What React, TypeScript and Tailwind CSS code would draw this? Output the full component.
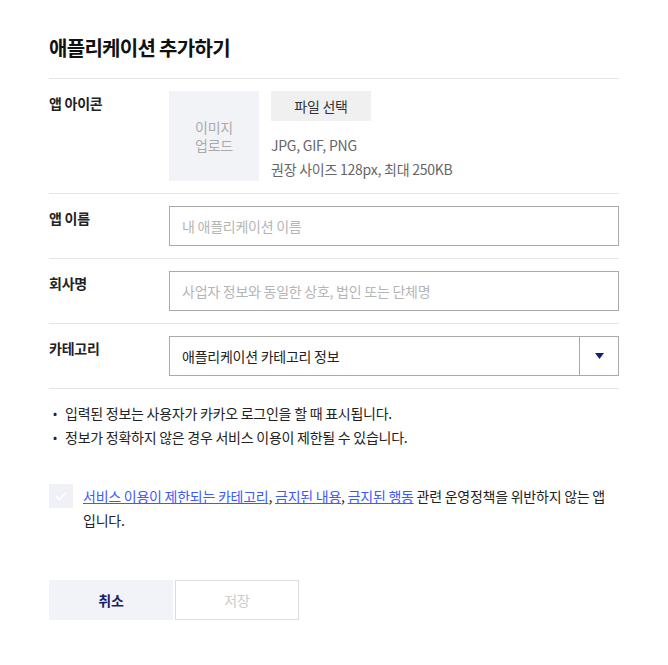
import React from "react";

const font = { fontFamily: '"Noto Sans CJK KR", "Noto Sans", sans-serif' };

function Row({
  label,
  children,
}: {
  label: string;
  children: React.ReactNode;
}) {
  return (
    <div className="flex border-b border-[#e5e5e5] py-[12px]">
      <div className="w-[120px] shrink-0 text-[14px] font-bold leading-[24px] text-[#222]">
        {label}
      </div>
      <div className="flex-1">{children}</div>
    </div>
  );
}

export default function App() {
  return (
    <div
      className="min-h-screen bg-white px-[49px] pt-[33px] tracking-[-0.25px]"
      style={font}
    >
      {/* 제목 */}
      <h1 className="border-b border-[#e5e5e5] pb-[15px] text-[20px] font-bold leading-[30px] tracking-[-0.7px] text-[#111]">
        애플리케이션 추가하기
      </h1>

      {/* 앱 아이콘 */}
      <Row label="앱 아이콘">
        <div className="flex gap-[12px]">
          <div className="flex h-[90px] w-[90px] items-center justify-center bg-[#f2f3f7] text-center text-[14px] leading-[18px] text-[#aaa]">
            이미지
            <br />
            업로드
          </div>
          <div>
            <button className="h-[30px] w-[100px] bg-[#f0f0f0] text-[14px] text-[#333]">
              파일 선택
            </button>
            <div className="mt-[12px] text-[14px] leading-[24px] text-[#666]">
              <p>JPG, GIF, PNG</p>
              <p>권장 사이즈 128px, 최대 250KB</p>
            </div>
          </div>
        </div>
      </Row>

      {/* 앱 이름 */}
      <Row label="앱 이름">
        <input
          className="h-[40px] w-full border border-[#aaa] px-[12px] text-[14px] tracking-[-0.25px] text-[#222] outline-none placeholder:text-[#b5b5b5]"
          placeholder="내 애플리케이션 이름"
          style={font}
        />
      </Row>

      {/* 회사명 */}
      <Row label="회사명">
        <input
          className="h-[40px] w-full border border-[#aaa] px-[12px] text-[14px] tracking-[-0.25px] text-[#222] outline-none placeholder:text-[#b5b5b5]"
          placeholder="사업자 정보와 동일한 상호, 법인 또는 단체명"
          style={font}
        />
      </Row>

      {/* 카테고리 */}
      <Row label="카테고리">
        <div className="flex h-[40px] w-full border border-[#aaa]">
          <div className="flex flex-1 items-center px-[12px] text-[14px] text-[#222]">
            애플리케이션 카테고리 정보
          </div>
          <div className="flex w-[39px] items-center justify-center border-l border-[#aaa]">
            <svg width="9" height="6" viewBox="0 0 9 6">
              <path d="M0 0h9L4.5 6z" fill="#1b1e6b" />
            </svg>
          </div>
        </div>
      </Row>

      {/* 안내 */}
      <ul className="pt-[12px] text-[14px] leading-[24px] text-[#222]">
        <li className="flex">
          <span className="w-[16px] pl-[4px] text-[12px]">•</span>
          입력된 정보는 사용자가 카카오 로그인을 할 때 표시됩니다.
        </li>
        <li className="flex">
          <span className="w-[16px] pl-[4px] text-[12px]">•</span>
          정보가 정확하지 않은 경우 서비스 이용이 제한될 수 있습니다.
        </li>
      </ul>

      {/* 동의 */}
      <div className="mt-[35px] flex gap-[10px]">
        <div className="flex h-[24px] w-[24px] shrink-0 items-center justify-center bg-[#f0f1f6]">
          <svg width="12" height="10" viewBox="0 0 12 10" fill="none">
            <path d="M1 5l3.5 3.5L11 1.5" stroke="#fff" strokeWidth="1.6" />
          </svg>
        </div>
        <p className="pr-[8px] text-[14px] leading-[24px] text-[#222]">
          <a className="text-[#3d5afe] underline">서비스 이용이 제한되는 카테고리</a>,{" "}
          <a className="text-[#3d5afe] underline">금지된 내용</a>,{" "}
          <a className="text-[#3d5afe] underline">금지된 행동</a> 관련 운영정책을
          위반하지 않는 앱입니다.
        </p>
      </div>

      {/* 버튼 */}
      <div className="mt-[48px] flex gap-[2px]">
        <button className="h-[40px] w-[124px] bg-[#f2f3f8] text-[14px] font-bold text-[#1b1e6b]">
          취소
        </button>
        <button className="h-[40px] w-[124px] border border-[#ddd] bg-white text-[14px] text-[#ccc]">
          저장
        </button>
      </div>
    </div>
  );
}
